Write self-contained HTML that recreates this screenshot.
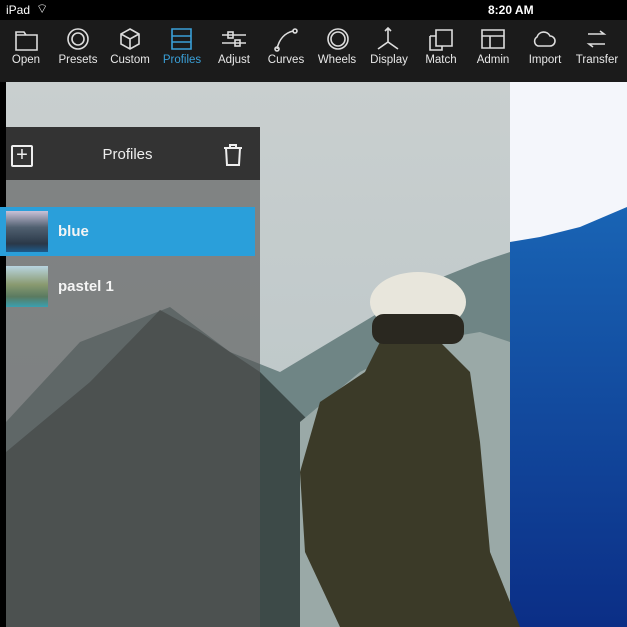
<!DOCTYPE html><html><head><style>
body{margin:0;width:627px;height:627px;overflow:hidden;background:#000;font-family:"Liberation Sans",sans-serif;position:relative}
.sb{position:absolute;top:0;left:0;width:627px;height:20px;background:#000;color:#fff;font-size:12px}
.tb{position:absolute;top:20px;left:0;width:627px;height:62px;background:#1b1b1b}
.it{position:absolute;top:34px;width:60px;text-align:center;color:#e8e8e8;font-size:11.5px}
.ic{position:absolute;top:7px}
</style></head><body>
<div class="sb"><span style="position:absolute;left:6px;top:3px">iPad</span><span style="position:absolute;left:36px;top:1px;font-size:13px">⌔</span><span style="position:absolute;left:488px;top:3px;font-weight:bold">8:20 AM</span></div>
<div class="tb">
<svg width="627" height="62" style="position:absolute;left:0;top:0" fill="none" stroke="#ddd" stroke-width="1.6">
<path d="M16 12h8l2 3h11v15H16z M16 15h10"/>
<circle cx="78" cy="19" r="10"/><circle cx="78" cy="19" r="6"/>
<path d="M130 9l9 5v10l-9 5-9-5V14z M121 14l9 5 9-5 M130 19v10"/>
<path d="M172 9h19v20h-19z M172 16h19 M172 22h19" stroke="#3aa0d8"/>
<path d="M222 15h24 M222 23h24"/><rect x="228" y="12" width="5" height="6"/><rect x="235" y="20" width="5" height="6"/>
<path d="M277 29c2-10 8-16 16-18"/><circle cx="277" cy="29" r="2"/><circle cx="295" cy="11" r="2"/>
<circle cx="338" cy="19" r="10"/><circle cx="338" cy="19" r="7"/>
<path d="M388 8v14 M378 29l10-7 10 7 M385 11l3-3 3 3"/>
<path d="M436 10h16v16h-16z M430 16h6 M430 16v14h12v-4"/>
<path d="M482 10h22v18h-22z M482 16h22 M490 16v12"/>
<path d="M538 26h12a5 5 0 0 0 0-10 7 7 0 0 0-13 1 5 5 0 0 0 1 9z"/>
<path d="M588 14h16l-4-3 M605 24h-16l4 3"/>
</svg>
<div class="it" style="left:-4px">Open</div><div class="it" style="left:48px">Presets</div><div class="it" style="left:100px">Custom</div><div class="it" style="left:152px;color:#3aa0d8">Profiles</div><div class="it" style="left:204px">Adjust</div><div class="it" style="left:256px">Curves</div><div class="it" style="left:307px">Wheels</div><div class="it" style="left:359px">Display</div><div class="it" style="left:411px">Match</div><div class="it" style="left:463px">Admin</div><div class="it" style="left:515px">Import</div><div class="it" style="left:567px">Transfer</div>
</div>
<svg width="627" height="545" style="position:absolute;left:0;top:82px">
<defs><linearGradient id="sky" x1="0" y1="0" x2="0" y2="1"><stop offset="0" stop-color="#c9cfcf"/><stop offset="1" stop-color="#b8c4c6"/></linearGradient>
<linearGradient id="bl" x1="0" y1="0" x2="0" y2="1"><stop offset="0" stop-color="#1d74c2"/><stop offset="1" stop-color="#0b2e86"/></linearGradient></defs>
<rect x="6" y="0" width="504" height="545" fill="url(#sky)"/>
<polygon points="6,340 80,260 170,225 230,270 280,290 330,260 380,230 430,200 480,180 510,170 510,545 6,545" fill="#6f8585"/>
<polygon points="6,370 90,300 160,228 200,250 260,290 300,330 330,360 320,545 6,545" fill="#3d4a48"/>
<polygon points="300,340 360,290 420,260 480,250 510,260 510,545 300,545" fill="#9aa9a7"/>
<rect x="510" y="0" width="117" height="545" fill="url(#bl)"/>
<polygon points="510,0 627,0 627,125 580,145 540,155 510,160" fill="#f4f6fb"/>
<path d="M340 545 L305 470 L300 390 L320 320 L365 290 L380 260 L440 260 L470 290 L480 360 L490 470 L520 545Z" fill="#3b3a28"/>
<ellipse cx="418" cy="220" rx="48" ry="30" fill="#e8e6dc"/>
<rect x="372" y="232" width="92" height="30" rx="12" fill="#2a2820"/>
</svg>
<div style="position:absolute;left:0;top:127px;width:260px;height:500px;background:rgba(85,85,85,0.62)"></div>
<div style="position:absolute;left:0;top:127px;width:260px;height:53px;background:rgba(45,45,45,0.93)"></div>
<div style="position:absolute;left:0;top:127px;width:6px;height:500px;background:#000"></div>
<div style="position:absolute;left:11px;top:145px;width:18px;height:18px;border:2px solid #eee;border-radius:2px;color:#eee;font-size:20px;line-height:17px;text-align:center">+</div>
<div style="position:absolute;left:0;width:255px;top:146px;text-align:center;color:#eee;font-size:15px">Profiles</div>
<svg style="position:absolute;left:222px;top:143px" width="22" height="24" fill="none" stroke="#eee" stroke-width="2"><path d="M2 5h18 M8 5V2h6v3 M4 5l1 17h12l1-17"/></svg>
<div style="position:absolute;left:0;top:207px;width:255px;height:49px;background:#2a9fda"></div>
<div style="position:absolute;left:6px;top:211px;width:42px;height:41px;background:linear-gradient(#c9c2d8 0%,#506070 40%,#2a3848 80%,#1e5a8a)"></div>
<div style="position:absolute;left:6px;top:266px;width:42px;height:41px;background:linear-gradient(#b8d4e0 0%,#8a9a70 45%,#5a7a60 75%,#3aa0b0)"></div>
<div style="position:absolute;left:58px;top:223px;color:#f4f4f4;font-size:15px;font-weight:bold">blue</div>
<div style="position:absolute;left:58px;top:278px;color:#f4f4f4;font-size:15px;font-weight:bold">pastel 1</div>
</body></html>
